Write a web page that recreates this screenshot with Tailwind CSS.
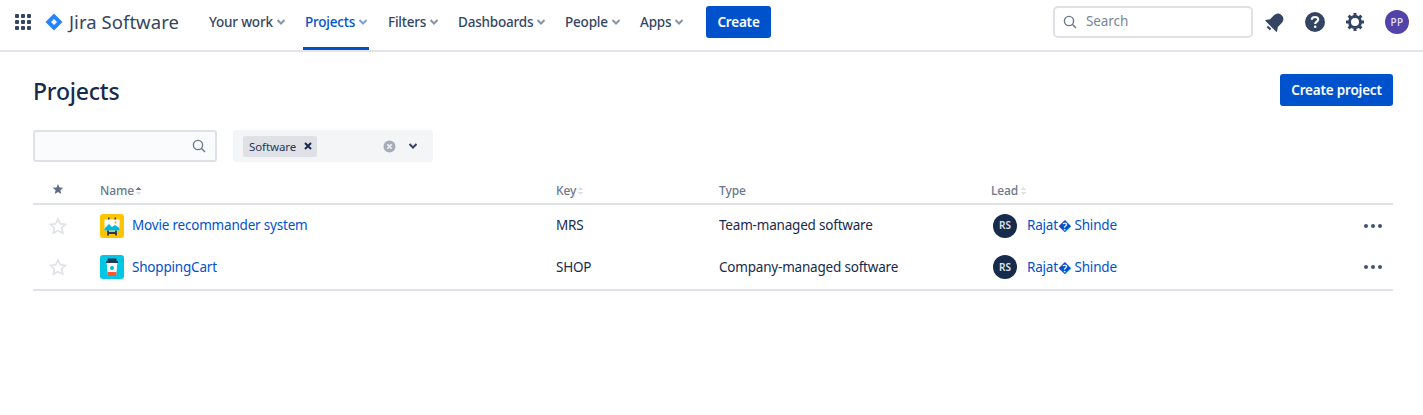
<!DOCTYPE html>
<html lang="en">
<head>
<meta charset="UTF-8" />
<title>Projects - Jira Software</title>
<script src="https://cdn.jsdelivr.net/npm/@tailwindcss/browser@4"></script>
</head>
<body class="bg-white font-['Noto_Sans',sans-serif] text-[#172b4d] h-[415px] overflow-hidden">
  <!-- top nav -->
  <header class="h-[52px] flex items-stretch bg-white border-b-2 border-[#e3e4ea] pl-[14px] pr-[14px]">
    <svg class="w-[18px] h-[18px] mt-[13px]" viewBox="0 0 18 18" fill="#344563">
      <rect x="1" y="1" width="4" height="4" rx="1"/><rect x="7" y="1" width="4" height="4" rx="1"/><rect x="13" y="1" width="4" height="4" rx="1"/>
      <rect x="1" y="7" width="4" height="4" rx="1"/><rect x="7" y="7" width="4" height="4" rx="1"/><rect x="13" y="7" width="4" height="4" rx="1"/>
      <rect x="1" y="13" width="4" height="4" rx="1"/><rect x="7" y="13" width="4" height="4" rx="1"/><rect x="13" y="13" width="4" height="4" rx="1"/>
    </svg>
    <div class="flex items-center h-[44px] ml-[13px] w-[150px] whitespace-nowrap">
      <svg class="w-[18px] h-[18px]" viewBox="0 0 18 18"><path d="M9 0.5 17.5 9 9 17.5 0.5 9Z" fill="#2684ff"/><path d="M9 6 12 9 9 12 6 9Z" fill="#fff"/></svg>
      <span class="ml-[6px] text-[18.5px] tracking-[0.05px] text-[#344563] leading-none">Jira Software</span>
    </div>
    <nav class="flex ml-[14px] h-[50px] text-[13.5px] tracking-[-0.2px] font-medium text-[#344563] whitespace-nowrap">
      <a class="w-[94px] flex items-center pb-[6px]">Your work<svg class="w-[10px] h-[10px] ml-[3px]" viewBox="0 0 10 10" fill="none" stroke="#8993a4" stroke-width="2"><path d="M1.5 3 5 6.500 8.500 3"/></svg></a>
      <a class="w-[66px] flex items-center pl-[2px] pb-[3px] text-[#0052cc] border-b-[3px] border-[#0052cc]">Projects<svg class="w-[10px] h-[10px] ml-[3px]" viewBox="0 0 10 10" fill="none" stroke="#7a9fdc" stroke-width="2"><path d="M1.5 3 5 6.500 8.500 3"/></svg></a>
      <a class="w-[70px] ml-[19px] flex items-center pb-[6px]">Filters<svg class="w-[10px] h-[10px] ml-[3px]" viewBox="0 0 10 10" fill="none" stroke="#8993a4" stroke-width="2"><path d="M1.5 3 5 6.500 8.500 3"/></svg></a>
      <a class="w-[107px] flex items-center pb-[6px]">Dashboards<svg class="w-[10px] h-[10px] ml-[3px]" viewBox="0 0 10 10" fill="none" stroke="#8993a4" stroke-width="2"><path d="M1.5 3 5 6.500 8.500 3"/></svg></a>
      <a class="w-[75px] flex items-center pb-[6px]">People<svg class="w-[10px] h-[10px] ml-[3px]" viewBox="0 0 10 10" fill="none" stroke="#8993a4" stroke-width="2"><path d="M1.5 3 5 6.500 8.500 3"/></svg></a>
      <a class="w-[66px] flex items-center pb-[6px]">Apps<svg class="w-[10px] h-[10px] ml-[3px]" viewBox="0 0 10 10" fill="none" stroke="#8993a4" stroke-width="2"><path d="M1.5 3 5 6.500 8.500 3"/></svg></a>
    </nav>
    <button class="w-[65px] h-[32px] mt-[6px] rounded-[3px] bg-[#0052cc] text-white text-[13.5px] tracking-[-0.2px] font-semibold">Create</button>
    <div class="ml-auto flex items-start">
      <div class="w-[200px] h-[32px] mt-[6px] border-2 border-[#dfe1e6] rounded-[5px] flex items-center pl-[8px] text-[13.5px] tracking-[-0.1px] text-[#7a869a]">
        <svg class="w-[14px] h-[14px]" viewBox="0 0 14 14" fill="none" stroke="#6b778c" stroke-width="1.400"><circle cx="6" cy="6" r="4.600"/><path d="M9.500 9.500 13 13"/></svg>
        <span class="ml-[9px] pb-[2px]">Search</span>
      </div>
      <svg class="w-[20px] h-[20px] mt-[12px] ml-[12px]" viewBox="0 0 20 20" fill="#344563"><g transform="rotate(45 10 10)"><path d="M10 0.500C6 0.500 4.500 3.500 4.500 7V11.500L2 15V16H18V15L15.500 11.500V7C15.500 3.500 14 0.500 10 0.500Z"/><path d="M7.800 17.500H12.200V19.500H7.800Z"/></g></svg>
      <svg class="w-[20px] h-[20px] mt-[12px] ml-[20px]" viewBox="0 0 20 20"><circle cx="10" cy="10" r="10" fill="#344563"/><path d="M6.800 7.800C6.800 5.900 8.200 5 10 5 11.900 5 13.200 6 13.200 7.600 13.200 9.600 10.200 9.700 10.200 12" fill="none" stroke="#fff" stroke-width="2.200"/><circle cx="10.200" cy="14.700" r="1.300" fill="#fff"/></svg>
      <svg class="w-[20px] h-[20px] mt-[12px] ml-[20px]" viewBox="0 0 20 20" fill="none" stroke="#344563"><circle cx="10" cy="10" r="5.500" stroke-width="3"/><path d="M10 1v3M10 16v3M1 10h3M16 10h3M3.600 3.600l2.100 2.100M14.300 14.300l2.100 2.100M3.600 16.400l2.100-2.100M14.300 5.700l2.100-2.100" stroke-width="3"/></svg>
      <div class="w-[24px] h-[24px] mt-[10px] ml-[20px] rounded-full bg-[#5243aa] text-[#e6e3f5] text-[10px] font-medium flex items-center justify-center tracking-[0.5px]">PP</div>
    </div>
  </header>

  <main class="pl-[33px] pr-[30px]">
    <div class="flex justify-between h-[78px] items-start">
      <h1 class="text-[23px] font-medium leading-[28px] mt-[25px] tracking-[-0.2px]">Projects</h1>
      <button class="w-[113px] h-[32px] mt-[22px] rounded-[3px] bg-[#0052cc] text-white text-[13.5px] tracking-[-0.2px] font-semibold">Create project</button>
    </div>

    <!-- filters -->
    <div class="flex gap-[16px]">
      <div class="w-[184px] h-[32px] bg-[#fafbfc] border-2 border-[#dfe1e6] rounded-[3px] flex items-center justify-end pr-[9px]">
        <svg class="w-[14px] h-[14px]" viewBox="0 0 14 14" fill="none" stroke="#6b778c" stroke-width="1.400"><circle cx="6" cy="6" r="4.600"/><path d="M9.500 9.500 13 13"/></svg>
      </div>
      <div class="w-[200px] h-[32px] bg-[#f4f5f7] rounded-[3px] flex items-center pl-[10px]">
        <div class="w-[74px] h-[21px] bg-[#dfe1e6] rounded-[2px] flex items-center pl-[6px] text-[11.5px] tracking-[-0.1px] text-[#253858]">
          <span class="pt-[1px]">Software</span>
          <svg class="w-[8px] h-[8px] ml-[8px]" viewBox="0 0 8 8" stroke="#172b4d" stroke-width="2"><path d="M1 1 7 7M7 1 1 7"/></svg>
        </div>
        <svg class="w-[13px] h-[13px] ml-[66px]" viewBox="0 0 13 13"><circle cx="6.500" cy="6.500" r="6" fill="#a5adba"/><path d="M4.300 4.300 8.700 8.700M8.700 4.300 4.300 8.700" stroke="#f4f5f7" stroke-width="1.600"/></svg>
        <svg class="w-[10px] h-[10px] ml-[12px]" viewBox="0 0 10 10" fill="none" stroke="#344563" stroke-width="2"><path d="M1.500 3 5 6.500 8.500 3"/></svg>
      </div>
    </div>

    <!-- project table -->
    <div class="mt-[18px]">
      <div class="flex h-[25px] items-center text-[12px] tracking-[-0.1px] font-medium text-[#6b778c] border-b-2 border-[#dfe1e6] pb-[1px]">
        <div class="w-[67px] pl-[19px]"><svg class="w-[12px] h-[12px] mt-[-4px]" viewBox="0 0 24 24" fill="#5e6c84"><path d="M12 2l3 7 7.500.7-5.700 5 1.700 7.300L12 18.200 5.500 22l1.700-7.300-5.700-5L9 9z"/></svg></div>
        <div class="w-[456px] flex items-center">Name<svg class="w-[7px] h-[10px] ml-[1px]" viewBox="0 0 7 10"><path d="M3.500 1 6.500 4H.500Z" fill="#6b778c"/><path d="M3.500 9 6.500 6H.500Z" fill="#dfe1e6"/></svg></div>
        <div class="w-[163px] flex items-center">Key<svg class="w-[7px] h-[10px] ml-[1px]" viewBox="0 0 7 10"><path d="M3.500 1 6.500 4H.500Z" fill="#dfe1e6"/><path d="M3.500 9 6.500 6H.500Z" fill="#dfe1e6"/></svg></div>
        <div class="w-[272px]">Type</div>
        <div class="flex items-center">Lead<svg class="w-[7px] h-[10px] ml-[2px]" viewBox="0 0 7 10"><path d="M3.500 1 6.500 4H.500Z" fill="#dfe1e6"/><path d="M3.500 9 6.500 6H.500Z" fill="#dfe1e6"/></svg></div>
      </div>

      <div class="flex h-[42px] items-center text-[13.5px] tracking-[-0.2px] pb-[1px]">
        <div class="w-[67px] pl-[16px]"><svg class="w-[18px] h-[18px]" viewBox="0 0 24 24" fill="none" stroke="#dfe1e6" stroke-width="2.200"><path d="M12 2.500l3 6.500 7 .8-5.200 4.800 1.500 7L12 18.100 5.700 21.600l1.500-7L2 9.800l7-.8z"/></svg></div>
        <div class="w-[456px] flex items-center">
          <svg class="w-[24px] h-[24px] shrink-0" viewBox="0 0 24 24"><rect width="24" height="24" rx="3" fill="#ffc400"/><rect x="4.500" y="5.500" width="15" height="11" fill="#fff"/><path d="M4.500 14.500 9 10 12 13 15 11 19.500 14V16.500H4.500Z" fill="#00b8d9"/><circle cx="15.500" cy="8.500" r="1" fill="#ff8b00"/><rect x="8" y="3.500" width="1.500" height="2" fill="#253858"/><rect x="14.500" y="3.500" width="1.500" height="2" fill="#253858"/><path d="M8 16.500V21.500M16 16.500V21.500M8 19H16" fill="none" stroke="#253858" stroke-width="1.800"/></svg>
          <a class="ml-[8px] text-[#0052cc]">Movie recommander system</a>
        </div>
        <div class="w-[163px]">MRS</div>
        <div class="w-[272px]">Team-managed software</div>
        <div class="flex items-center flex-1">
          <div class="w-[24px] h-[24px] ml-[2px] rounded-full bg-[#172b4d] text-[#dfe1e6] text-[10px] font-semibold tracking-normal flex items-center justify-center">RS</div>
          <a class="ml-[10px] text-[#0052cc]">Rajat� Shinde</a>
          <svg class="ml-auto mr-[10px] w-[20px] h-[6px]" viewBox="0 0 20 6" fill="#42526e"><circle cx="3" cy="3" r="2"/><circle cx="10" cy="3" r="2"/><circle cx="17" cy="3" r="2"/></svg>
        </div>
      </div>

      <div class="flex h-[44px] items-center text-[13.5px] tracking-[-0.2px] border-b-2 border-[#dfe1e6] pb-[2px]">
        <div class="w-[67px] pl-[16px]"><svg class="w-[18px] h-[18px]" viewBox="0 0 24 24" fill="none" stroke="#dfe1e6" stroke-width="2.200"><path d="M12 2.500l3 6.500 7 .8-5.200 4.800 1.500 7L12 18.100 5.700 21.600l1.500-7L2 9.800l7-.8z"/></svg></div>
        <div class="w-[456px] flex items-center">
          <svg class="w-[24px] h-[24px] shrink-0" viewBox="0 0 24 24"><rect width="24" height="24" rx="3" fill="#00c7e6"/><path d="M6.500 7H17.500L16 21H8Z" fill="#fff"/><path d="M7.500 17H16.500L16 21H8Z" fill="#ff5630"/><rect x="6" y="6" width="12" height="2" fill="#253858"/><rect x="7.500" y="3.500" width="9" height="2.500" fill="#253858"/><circle cx="12" cy="13" r="2" fill="#00b8d9"/></svg>
          <a class="ml-[8px] text-[#0052cc]">ShoppingCart</a>
        </div>
        <div class="w-[163px]">SHOP</div>
        <div class="w-[272px]">Company-managed software</div>
        <div class="flex items-center flex-1">
          <div class="w-[24px] h-[24px] ml-[2px] rounded-full bg-[#172b4d] text-[#dfe1e6] text-[10px] font-semibold tracking-normal flex items-center justify-center">RS</div>
          <a class="ml-[10px] text-[#0052cc]">Rajat� Shinde</a>
          <svg class="ml-auto mr-[10px] w-[20px] h-[6px]" viewBox="0 0 20 6" fill="#42526e"><circle cx="3" cy="3" r="2"/><circle cx="10" cy="3" r="2"/><circle cx="17" cy="3" r="2"/></svg>
        </div>
      </div>
    </div>
  </main>
</body>
</html>
